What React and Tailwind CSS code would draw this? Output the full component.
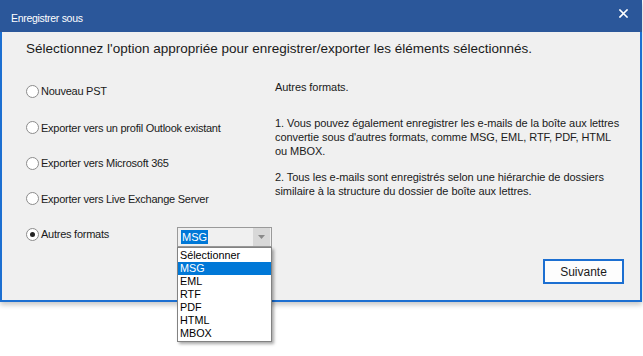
import React from "react";

const OPTIONS = [
  { id: "pst", label: "Nouveau PST" },
  { id: "outlook", label: "Exporter vers un profil Outlook existant" },
  { id: "m365", label: "Exporter vers Microsoft 365" },
  { id: "live", label: "Exporter vers Live Exchange Server" },
  { id: "other", label: "Autres formats" },
];

const FORMATS = ["Sélectionner", "MSG", "EML", "RTF", "PDF", "HTML", "MBOX"];

const Radio = ({ checked }) => (
  <span className="w-[13px] h-[13px] rounded-full border border-[#8c8c8c] bg-white flex items-center justify-center shrink-0">
    {checked && <span className="w-[5px] h-[5px] rounded-full bg-[#222]" />}
  </span>
);

export default function App() {
  const selected = "other";

  return (
    <div className="w-[643px] h-[356px] bg-white font-['Liberation_Sans',Arial,sans-serif] text-[#1a1a1a] overflow-hidden">
      <div className="w-[642px] h-[302px] flex flex-col shadow-[0_3px_5px_rgba(0,0,0,0.22)]">
        {/* Title bar */}
        <div className="h-[32px] bg-[#2b579a] flex items-center justify-between pl-[11px] pr-[14px] shrink-0">
          <span className="text-white text-[10.5px] tracking-[-0.3px] pt-[6px]">Enregistrer sous</span>
          <svg width="9" height="9" viewBox="0 0 9 9" className="-mt-[6px]">
            <path d="M1 1 L8 8 M8 1 L1 8" stroke="white" strokeWidth="1.6" strokeLinecap="square" />
          </svg>
        </div>

        {/* Body */}
        <div className="relative flex-1 bg-[#f0f0f0] border-l-2 border-r-2 border-b-2 border-[#1c6fd1] pl-[24px] pt-[10px]">
          <p className="text-[13.5px] leading-[14px] whitespace-nowrap">
            Sélectionnez l'option appropriée pour enregistrer/exporter les éléments sélectionnés.
          </p>

          <div className="flex mt-[25px]">
            {/* Options */}
            <div className="w-[249px] flex flex-col gap-[21.5px] pt-[3px] text-[11px] tracking-[-0.25px]">
              {OPTIONS.map((o, i) => (
                <div key={o.id} className={`h-[14px] flex items-center gap-[2px] relative ${i === 0 ? "mb-[1px]" : ""}`}>
                  <Radio checked={o.id === selected} />
                  <span className="whitespace-nowrap leading-[14px]">{o.label}</span>
                  {o.id === "other" && (
                    <div className="absolute left-[151px] top-0 w-[95px] tracking-normal">
                      <div className="h-[20px] border border-[#9a9a9a] bg-[#f0f0f0] flex items-center pl-[3px] pr-[1px]">
                        <span className="bg-[#0078d7] text-white px-[1px] leading-[14px]">MSG</span>
                        <span className="ml-auto w-[17px] h-[18px] bg-[#d8d8d8] flex items-center justify-center">
                          <svg width="7" height="4" viewBox="0 0 7 4">
                            <path d="M0 0 L7 0 L3.5 4 Z" fill="#8a8a8a" />
                          </svg>
                        </span>
                      </div>
                      <ul className="absolute top-[20px] left-0 w-[95px] bg-white border border-[#828282] shadow-[2px_2px_3px_rgba(0,0,0,0.35)] py-[1px] text-[10.8px]">
                        {FORMATS.map((f) => (
                          <li
                            key={f}
                            className={`h-[13px] leading-[13px] pl-[2px] ${f === "MSG" ? "bg-[#0078d7] text-white" : "text-black"}`}
                          >
                            {f}
                          </li>
                        ))}
                      </ul>
                    </div>
                  )}
                </div>
              ))}
            </div>

            {/* Description */}
            <div className="text-[11px] tracking-[-0.07px] leading-[14px] whitespace-nowrap -mt-[1px]">
              <p>Autres formats.</p>
              <p className="mt-[22px]">
                1. Vous pouvez également enregistrer les e-mails de la boîte aux lettres
                <br />
                convertie sous d'autres formats, comme MSG, EML, RTF, PDF, HTML
                <br />
                ou MBOX.
              </p>
              <p className="mt-[12px]">
                2. Tous les e-mails sont enregistrés selon une hiérarchie de dossiers
                <br />
                similaire à la structure du dossier de boîte aux lettres.
              </p>
            </div>
          </div>

          <button className="absolute right-[16px] bottom-[16px] w-[81px] h-[25px] bg-[#fdfdfd] border-2 border-[#1c6fd1] text-[12px] text-[#1a1a1a]">
            Suivante
          </button>
        </div>
      </div>
    </div>
  );
}
